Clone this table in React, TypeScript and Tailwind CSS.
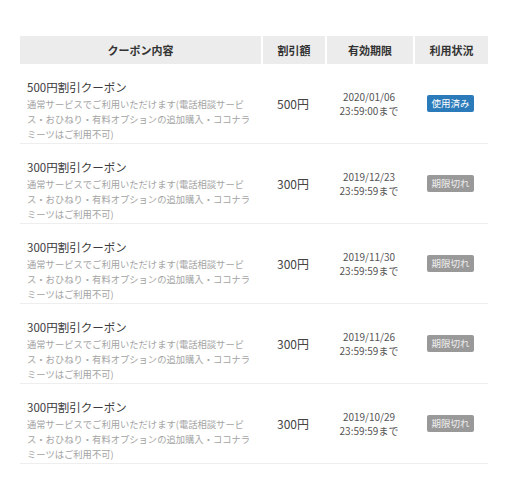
import React from "react";

type Coupon = {
  title: string;
  amount: string;
  date: string;
  time: string;
  used: boolean;
};

const coupons: Coupon[] = [
  { title: "500円割引クーポン", amount: "500円", date: "2020/01/06", time: "23:59:00まで", used: true },
  { title: "300円割引クーポン", amount: "300円", date: "2019/12/23", time: "23:59:59まで", used: false },
  { title: "300円割引クーポン", amount: "300円", date: "2019/11/30", time: "23:59:59まで", used: false },
  { title: "300円割引クーポン", amount: "300円", date: "2019/11/26", time: "23:59:59まで", used: false },
  { title: "300円割引クーポン", amount: "300円", date: "2019/10/29", time: "23:59:59まで", used: false },
];

const descLines = [
  "通常サービスでご利用いただけます(電話相談サービ",
  "ス・おひねり・有料オプションの追加購入・ココナラ",
  "ミーツはご利用不可)",
];

const font = "font-['Noto_Sans_CJK_JP','Noto_Sans',sans-serif]";

export default function App() {
  return (
    <div className={`w-[516px] h-[491px] bg-white pt-9 px-5 ${font}`}>
      <div className="w-[468px]">
        {/* header */}
        <div className="grid grid-cols-[241px_64px_88px_75px] h-[28px] bg-[#ececec] text-[11px] font-bold text-[#333]">
          <div className="flex items-center justify-center">クーポン内容</div>
          <div className="flex items-center justify-center border-l-2 border-white">割引額</div>
          <div className="flex items-center justify-center border-l-2 border-white">有効期限</div>
          <div className="flex items-center justify-center border-l-2 border-white">利用状況</div>
        </div>

        {coupons.map((c, i) => (
          <div
            key={i}
            className="grid grid-cols-[241px_64px_88px_75px] h-[80px] border-b border-[#eeeeee]"
          >
            <div className="pl-[7px] pt-[14px]">
              <div className="text-[11.5px] leading-[19px] text-[#3a3a3a]">{c.title}</div>
              <div className="text-[9.3px] leading-[15px] text-[#a3a3a3] whitespace-nowrap">
                {descLines.map((l, j) => (
                  <div key={j}>{l}</div>
                ))}
              </div>
            </div>
            <div className="flex items-center justify-center text-[12px] text-[#444]">{c.amount}</div>
            <div className="flex flex-col items-center justify-center text-[10px] leading-[14px] text-[#555]">
              <span>{c.date}</span>
              <span>{c.time}</span>
            </div>
            <div className="flex items-center justify-center">
              {c.used ? (
                <span className="rounded-[2px] bg-[#2b7bba] px-[4px] h-[17px] flex items-center text-[9.5px] text-white">
                  使用済み
                </span>
              ) : (
                <span className="rounded-[2px] bg-[#999999] px-[4px] h-[17px] flex items-center text-[9.5px] text-[#eeeeee]">
                  期限切れ
                </span>
              )}
            </div>
          </div>
        ))}
      </div>
    </div>
  );
}
